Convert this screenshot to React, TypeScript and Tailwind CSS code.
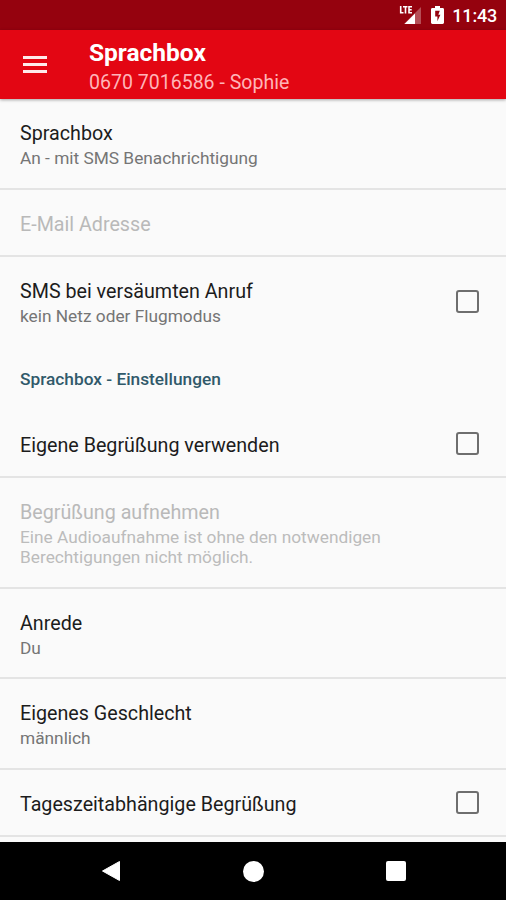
import { useState } from "react";

type Item = {
  id: string;
  title: string;
  summary?: string;
  disabled?: boolean;
  checkbox?: boolean;
  divider?: boolean;
};

const general: Item[] = [
  { id: "sprachbox", title: "Sprachbox", summary: "An - mit SMS Benachrichtigung", divider: true },
  { id: "email", title: "E-Mail Adresse", disabled: true, divider: true },
  { id: "sms", title: "SMS bei versäumten Anruf", summary: "kein Netz oder Flugmodus", checkbox: true },
];

const einstellungen: Item[] = [
  { id: "eigene", title: "Eigene Begrüßung verwenden", checkbox: true, divider: true },
  {
    id: "aufnehmen",
    title: "Begrüßung aufnehmen",
    summary: "Eine Audioaufnahme ist ohne den notwendigen Berechtigungen nicht möglich.",
    disabled: true,
    divider: true,
  },
  { id: "anrede", title: "Anrede", summary: "Du", divider: true },
  { id: "geschlecht", title: "Eigenes Geschlecht", summary: "männlich", divider: true },
  { id: "tageszeit", title: "Tageszeitabhängige Begrüßung", checkbox: true, divider: true },
];

function StatusBar() {
  return (
    <div className="flex h-[30px] shrink-0 items-center justify-end bg-[#95020e] pr-[9px] text-white">
      <svg width="24" height="20" viewBox="0 0 24 20" className="mr-[9px]">
        <path d="M23 2v17H6z" fill="#fff" fillOpacity="0.3" />
        <path d="M0 0h15.5v9h-3l-3 2H0z" fill="#95020e" />
        <path
          d="M2.7 1v6.8h2.8M5 1.800h4.500M7.500 1.800v6.700M14 1.800h-3v6h3M11 4.800h2.700"
          fill="none"
          stroke="#fff"
          strokeWidth="1.6"
        />
        <path d="M17 8.500V19H6.500z" fill="#fff" />
      </svg>
      <svg width="13" height="18" viewBox="0 0 13 18" className="mr-[8px]">
        <path
          fillRule="evenodd"
          d="M4 0h5v2h2.600c.8 0 1.400.6 1.400 1.400v13.200c0 .8-.6 1.400-1.400 1.400H1.400C.6 18 0 17.400 0 16.600V3.400C0 2.600.6 2 1.400 2H4zM8.800 4.800H4.200v5.700h2.200v4.700l3-6.400H7.300z"
          fill="#fff"
        />
      </svg>
      <span className="pt-[2px] text-[18px] font-medium leading-none tracking-[-0.2px]">11:43</span>
    </div>
  );
}

function Header() {
  return (
    <header className="z-10 flex h-[69px] shrink-0 items-center bg-[#e30613] pl-[23px] text-white shadow-[0_1px_3px_rgba(0,0,0,0.35)]">
      <button type="button" aria-label="Menü" className="flex w-[66px] flex-col gap-[4px]">
        <span className="h-[3px] w-[24px] bg-[#ffe9ea]" />
        <span className="h-[3px] w-[24px] bg-[#ffe9ea]" />
        <span className="h-[3px] w-[24px] bg-[#ffe9ea]" />
      </button>
      <div className="pt-[4px]">
        <h1 className="text-[24.5px] font-bold leading-[30px]">Sprachbox</h1>
        <p className="mt-[2px] text-[19.55px] leading-[26px] text-[#ffb4b8]">0670 7016586 - Sophie</p>
      </div>
    </header>
  );
}

function Row({ item, checked, onToggle }: { item: Item; checked: boolean; onToggle: () => void }) {
  return (
    <div
      className={`flex items-center justify-between pr-[27px] pl-5 ${
        item.divider ? "border-b-2 border-[#e4e4e4]" : ""
      }`}
    >
      <div className={`max-w-[390px] pt-[22px] ${item.summary ? "pb-[19.7px]" : "pb-[18px]"}`}>
        <div className={`text-[19.7px] leading-[25px] ${item.disabled ? "text-[#b9b9b9]" : "text-[#1c1c1c]"}`}>
          {item.title}
        </div>
        {item.summary && (
          <div
            className={`mt-[2px] text-[17.3px] leading-[20px] ${item.disabled ? "text-[#bcbcbc]" : "text-[#757575]"}`}
          >
            {item.summary}
          </div>
        )}
      </div>
      {item.checkbox && (
        <button
          type="button"
          role="checkbox"
          aria-checked={checked}
          aria-label={item.title}
          onClick={onToggle}
          className={`size-[23px] rounded-[3px] border-2 border-[#6e6e6e] ${checked ? "bg-[#e30613]" : ""}`}
        />
      )}
    </div>
  );
}

function NavBar() {
  return (
    <nav className="flex h-[58px] shrink-0 items-center justify-between bg-black pr-[100px] pl-[101px]">
      <svg width="20" height="22" viewBox="0 0 20 22">
        <path d="M18.500 1.500v19L1.500 11z" fill="#fff" stroke="#fff" strokeLinejoin="round" />
      </svg>
      <span className="size-[21px] rounded-full bg-white" />
      <span className="size-5 rounded-[2px] bg-white" />
    </nav>
  );
}

export default function App() {
  const [checked, setChecked] = useState<Record<string, boolean>>({});

  const toggle = (id: string) => setChecked((prev) => ({ ...prev, [id]: !prev[id] }));

  const renderRow = (item: Item) => (
    <Row key={item.id} item={item} checked={!!checked[item.id]} onToggle={() => toggle(item.id)} />
  );

  return (
    <div className="flex h-[900px] w-[506px] flex-col overflow-hidden bg-[#fafafa] font-[Roboto,sans-serif]">
      <StatusBar />
      <Header />
      <main className="flex-1 overflow-hidden">
        {general.map(renderRow)}
        <h2 className="h-[65.6px] pt-[24px] pl-5 text-[17.3px] leading-[20px] font-medium text-[#30596a]">
          Sprachbox - Einstellungen
        </h2>
        {einstellungen.map(renderRow)}
      </main>
      <NavBar />
    </div>
  );
}
